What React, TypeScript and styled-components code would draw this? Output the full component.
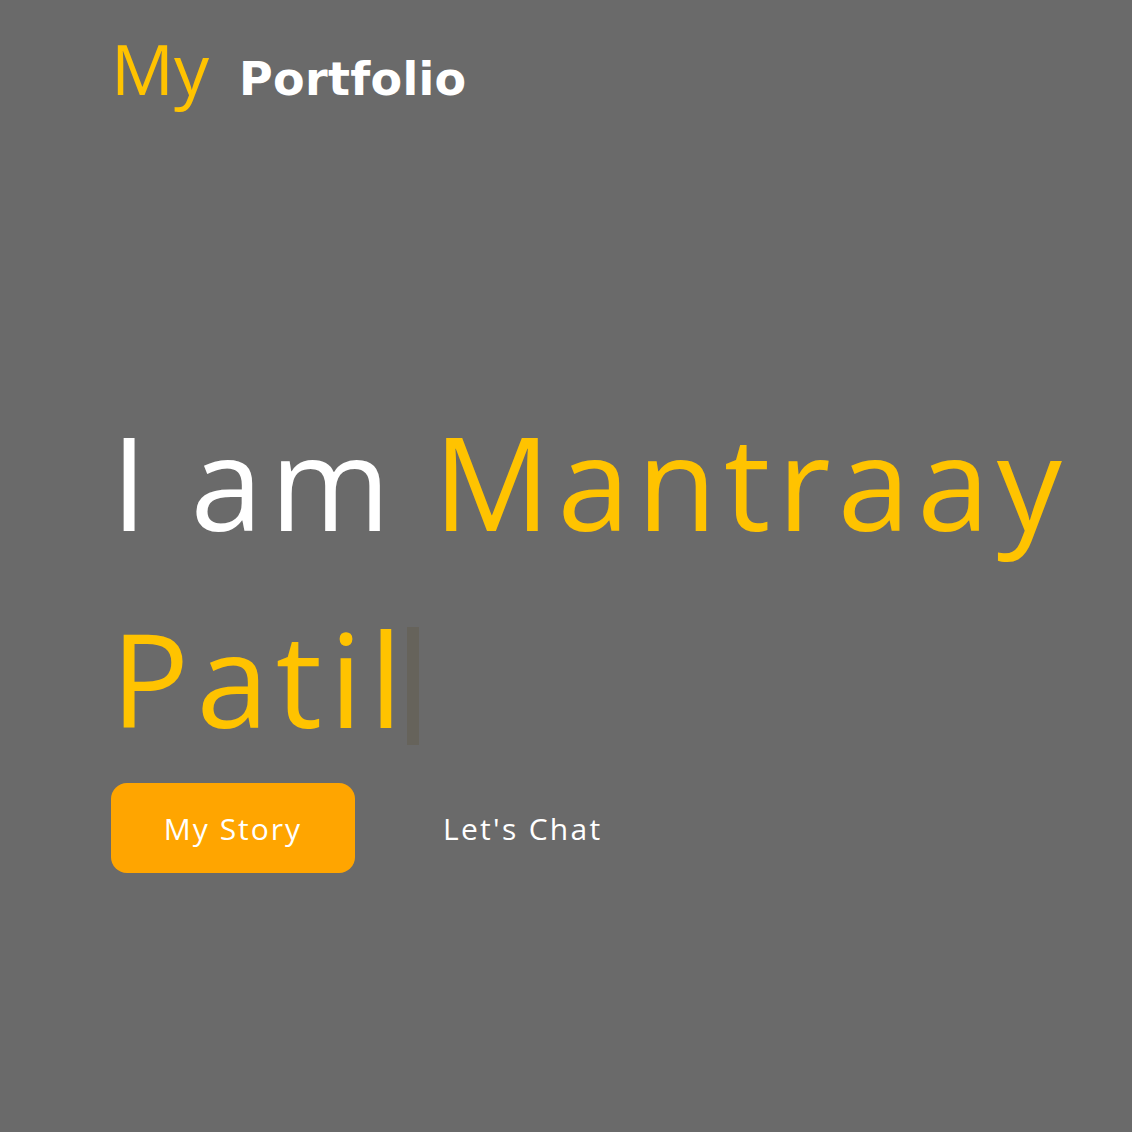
import React from "react";
import styled, { createGlobalStyle } from "styled-components";

const Global = createGlobalStyle`
  html, body { margin: 0; padding: 0; background: #6a6a6a; }
  body { font-family: "Open Sans", "DejaVu Sans", sans-serif; }
`;

const Page = styled.div`
  min-height: 1132px;
  background: #6a6a6a;
  padding: 0 0 0 111px;
  box-sizing: border-box;
  display: flex;
  flex-direction: column;
`;

const Header = styled.header`
  display: flex;
  align-items: baseline;
  gap: 30px;
  padding-top: 33px;
  height: 91px;
`;

const LogoMy = styled.span`
  font-family: "Open Sans", sans-serif;
  font-size: 70px;
  line-height: 1;
  color: #ffc300;
`;

const LogoRest = styled.span`
  font-family: "DejaVu Sans", sans-serif;
  font-weight: 700;
  font-size: 46px;
  letter-spacing: 0.3px;
  line-height: 1;
  color: #ffffff;
`;

const Hero = styled.section`
  margin-top: 258px;
  display: flex;
  flex-direction: column;
`;

const Heading = styled.h1`
  margin: 0;
  font-family: "Open Sans", sans-serif;
  font-weight: 400;
  font-size: 130px;
  line-height: 197px;
  letter-spacing: 7.2px;
  word-spacing: -5px;
  color: #ffffff;
  max-width: 1010px;
`;

const Accent = styled.span`
  color: #ffc300;
`;

const Cursor = styled.span`
  display: inline-block;
  width: 12px;
  height: 118px;
  margin-left: -2px;
  vertical-align: -17px;
  background: #66635b;
`;

const Actions = styled.div`
  display: flex;
  align-items: center;
  gap: 88px;
  margin-top: 7px;
`;

const PrimaryButton = styled.button`
  width: 244px;
  height: 90px;
  border: none;
  border-radius: 16px;
  background: #ffa500;
  color: #ffffff;
  font-family: "Open Sans", sans-serif;
  font-size: 30px;
  letter-spacing: 2px;
  cursor: pointer;
`;

const LinkButton = styled.a`
  color: #ffffff;
  font-family: "Open Sans", sans-serif;
  font-size: 30px;
  letter-spacing: 2.3px;
  text-decoration: none;
`;

export default function App() {
  return (
    <>
      <Global />
      <Page>
        <Header>
          <LogoMy>My</LogoMy>
          <LogoRest>Portfolio</LogoRest>
        </Header>
        <Hero>
          <Heading>
            I am <Accent>Mantraay Patil</Accent>
            <Cursor />
          </Heading>
          <Actions>
            <PrimaryButton>My Story</PrimaryButton>
            <LinkButton href="#">Let's Chat</LinkButton>
          </Actions>
        </Hero>
      </Page>
    </>
  );
}
